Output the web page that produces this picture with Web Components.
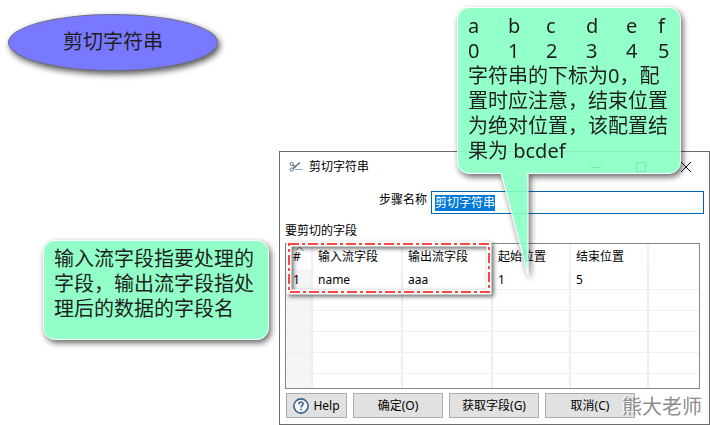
<!DOCTYPE html>
<html lang="zh-CN">
<head>
<meta charset="utf-8">
<title>剪切字符串</title>
<style>
  body { margin: 0; background: #fff; font: 12px/16px "Noto Sans", "Noto Sans CJK SC", sans-serif; color: #000; }
</style>
</head>
<body>
<note-board>
  <topic-oval>剪切字符串</topic-oval>
  <note-bubble class="fields">输入流字段指要处理的字段，输出流字段指处理后的数据的字段名</note-bubble>
  <step-dialog data-title="剪切字符串" data-step="剪切字符串">
    <field-table></field-table>
    <dialog-button slot="actions" icon>Help</dialog-button>
    <dialog-button slot="actions">确定(O)</dialog-button>
    <dialog-button slot="actions">获取字段(G)</dialog-button>
    <dialog-button slot="actions">取消(C)</dialog-button>
  </step-dialog>
  <mark-frame></mark-frame>
  <note-bubble class="index" tail>
    <index-row slot="rows" data-items="a,b,c,d,e,f"></index-row>
    <index-row slot="rows" data-items="0,1,2,3,4,5"></index-row>
    字符串的下标为0，配置时应注意，结束位置为绝对位置，该配置结果为 bcdef
  </note-bubble>
  <span class="sign">熊大老师</span>
</note-board>

<script>
const define = (name, html, setup) => {
  const tpl = document.createElement('template');
  tpl.innerHTML = html;
  customElements.define(name, class extends HTMLElement {
    constructor() {
      super();
      this.attachShadow({ mode: 'open' });
      this.shadowRoot.appendChild(tpl.content.cloneNode(true));
    }
    connectedCallback() { if (setup) setup(this, this.shadowRoot); }
  });
};

// free canvas: notes are pinned over the dialog
define('note-board', `
  <style>
    :host { display: block; position: relative; box-sizing: border-box; min-height: 100vh; padding: 151px 0 0 279px; overflow: hidden; }
    ::slotted(topic-oval) { position: absolute; left: 8px; top: 14px; }
    ::slotted(.fields) { position: absolute; left: 43px; top: 240px; height: 100px; }
    ::slotted(.index) { position: absolute; left: 457px; top: 7px; height: 167px; }
    ::slotted(mark-frame) { position: absolute; left: 286px; top: 241px; }
    ::slotted(.sign) { position: absolute; right: 8px; bottom: 6px; font-size: 20px; line-height: 25px; color: #8c8c8c; text-shadow: -1px -1px 0 #fff; }
  </style>
  <slot></slot>
`);

define('topic-oval', `
  <style>
    :host { display: flex; align-items: center; justify-content: center; box-sizing: border-box; width: 210px; height: 57px; padding-bottom: 2px;
            border: 1px solid #6c6c84; border-radius: 50%; background: #7979ff; box-shadow: 2px 3px 6px #000a;
            font-size: 20px; line-height: 25px; color: #1f1f1f; }
  </style>
  <slot></slot>
`);

define('note-bubble', `
  <style>
    :host { display: block; isolation: isolate; box-sizing: border-box; width: 226px; padding: 6px 11px; font-size: 20px; line-height: 25px; color: #1f1f1f; }
    .shape { position: absolute; inset: 0; z-index: -1; opacity: .9; filter: drop-shadow(2px 3px 3px #000a); }
    .box { position: absolute; inset: 0; border: 1px solid #fff; border-radius: 12px; background: #87ffc3; }
    .tail { display: none; position: absolute; left: 43px; top: calc(100% - 1px); width: 30px; height: 104px; }
    :host([tail]) { width: 224px; z-index: 1; }
    :host([tail]) .tail { display: block; }
  </style>
  <div class="shape">
    <div class="box"></div>
    <svg class="tail" viewBox="0 0 30 104" aria-hidden="true">
      <path d="M1 0L28 0L28 102Z" fill="#87ffc3"/>
      <path d="M1 0L28 102V0" fill="none" stroke="#fff" stroke-width="1.2"/>
    </svg>
  </div>
  <slot name="rows"></slot>
  <slot></slot>
`);

define('index-row', `
  <style>
    :host { display: grid; grid-template-columns: 40px 38px 40px 40px 32px auto; }
  </style>
`, (el, root) => {
  el.dataset.items.split(',').forEach(t => {
    const s = document.createElement('span');
    s.textContent = t;
    root.appendChild(s);
  });
});

define('mark-frame', `
  <style>
    :host { display: block; width: 206px; height: 54px; }
    svg { display: block; width: 100%; height: 100%; overflow: visible; filter: drop-shadow(2px 2px 2px #0009); }
    rect { fill: none; }
  </style>
  <svg viewBox="0 0 206 54" aria-hidden="true">
    <rect x="3" y="3" width="200" height="48" stroke="#fff" stroke-width="5"/>
    <rect x="3" y="3" width="200" height="48" stroke="#fb4646" stroke-width="2" stroke-dasharray="10 3 3 3"/>
  </svg>
`);

define('dialog-button', `
  <style>
    :host { display: block; width: 90px; }
    :host([icon]) { width: 61px; }
    button { display: flex; align-items: center; justify-content: center; gap: 4px; box-sizing: border-box; width: 100%; height: 25px; margin: 0; padding: 0;
             border: 1px solid #adadad; background: #e1e1e1; font: inherit; color: inherit; }
    svg { display: none; }
    :host([icon]) svg { display: block; }
  </style>
  <button type="button">
    <svg width="16" height="16" viewBox="0 0 16 16" fill="none" stroke="#3b6389" aria-hidden="true">
      <circle cx="8" cy="8" r="7.1" fill="#f4f7fa" stroke-width="1.6"/>
      <path d="M5.8 6.2C5.9 3.4 10.2 3.5 10.2 6C10.2 7.6 8 7.7 8 9.6M8 10.8V12.2" stroke-width="1.5"/>
    </svg>
    <slot></slot>
  </button>
`);

define('field-table', `
  <style>
    :host { display: block; height: 144px; overflow: hidden; border: 1px solid #828790; }
    table { width: 100%; table-layout: fixed; border-collapse: separate; border-spacing: 0; }
    th, td { box-sizing: border-box; height: 21px; padding: 0 0 0 5px; text-align: left; font-weight: normal; white-space: nowrap;
             border-right: 2px solid #ebeef4; border-bottom: 1px solid #efefef; }
    th { height: 25px; border-right-color: #f0f1f5; border-bottom: 0; }
    td { padding-top: 2px; }
    th:first-child, td:first-child { padding-left: 7px; }
    td:first-child { background: #f5f5f5; }
    th:last-child, td:last-child { border-right: 0; }
    th:first-child { position: relative; }
    svg { position: absolute; left: 9px; top: 2px; }
    .no { width: 27px; } .name { width: 90px; } .pos { width: 78px; }
  </style>
  <table>
    <colgroup><col class="no"><col class="name"><col class="name"><col class="pos"><col class="pos"><col></colgroup>
    <thead>
      <tr>
        <th><svg width="9" height="5" viewBox="0 0 9 5" fill="none" stroke="#555" aria-hidden="true"><path d="M1 4.5L4.5 1L8 4.5"/></svg>#</th>
        <th>输入流字段</th><th>输出流字段</th><th>起始位置</th><th>结束位置</th><th></th>
      </tr>
    </thead>
    <tbody>
      <tr><td>1</td><td>name</td><td>aaa</td><td>1</td><td>5</td><td></td></tr>
    </tbody>
  </table>
`, (el, root) => {
  const body = root.querySelector('tbody');
  while (body.rows.length < 6) {
    const tr = body.insertRow();
    for (let i = 0; i < 6; i++) tr.insertCell();
  }
});

define('step-dialog', `
  <style>
    :host { display: block; box-sizing: border-box; border: 1px solid #6b6b6b; background: #fff; }
    header { display: flex; align-items: center; height: 30px; padding: 0 17px 0 9px; }
    h1 { flex: 1; margin: 0 0 0 6px; font: inherit; }
    .win { display: flex; gap: 33px; }
    .win button { display: block; width: 12px; height: 12px; padding: 0; border: 0; background: none; }
    svg { display: block; }
    .step { display: flex; gap: 4px; height: 23px; margin: 9px 5px 0 99px; }
    label { padding-top: 1px; }
    input { flex: 1; min-width: 0; box-sizing: border-box; margin: 0; padding: 0 3px; border: 1px solid #0067b8; outline: 0; border-radius: 0; background: #fff; font: inherit; color: #000; }
    input::selection { background: #0078d7; color: #fff; }
    .caption { margin: 9px 5px 4px; }
    .grid { margin: 0 9px 0 5px; }
    footer { display: flex; gap: 6px; padding: 4px 6px 6px; }
  </style>
  <header>
    <svg width="14" height="14" viewBox="0 0 14 14" fill="none" stroke="#55758f" aria-hidden="true">
      <circle cx="2.700" cy="4" r="1.6"/><circle cx="2.700" cy="9.500" r="1.6"/>
      <path d="M4 8.600L11 2.500M4 5L7 7.200" stroke-width="1.4"/><path d="M6 9.500H13" stroke="#8ba4b8"/>
    </svg>
    <h1></h1>
    <div class="win">
      <button type="button" aria-label="最小化"><svg width="12" height="12" stroke="#000"><path d="M1 6.5H11"/></svg></button>
      <button type="button" aria-label="最大化"><svg width="12" height="12" fill="none" stroke="#000"><path d="M1.5 1.5H10.5V10.5H1.5Z"/></svg></button>
      <button type="button" aria-label="关闭"><svg width="12" height="12" stroke="#000"><path d="M1 1L11 11M11 1L1 11"/></svg></button>
    </div>
  </header>
  <div class="step"><label for="step">步骤名称</label><input id="step" type="text"></div>
  <div class="caption">要剪切的字段</div>
  <div class="grid"><slot></slot></div>
  <footer><slot name="actions"></slot></footer>
`, (el, root) => {
  root.querySelector('h1').textContent = el.dataset.title;
  const input = root.querySelector('input');
  input.value = el.dataset.step;
  input.focus();
  input.select();
});
</script>
</body>
</html>
